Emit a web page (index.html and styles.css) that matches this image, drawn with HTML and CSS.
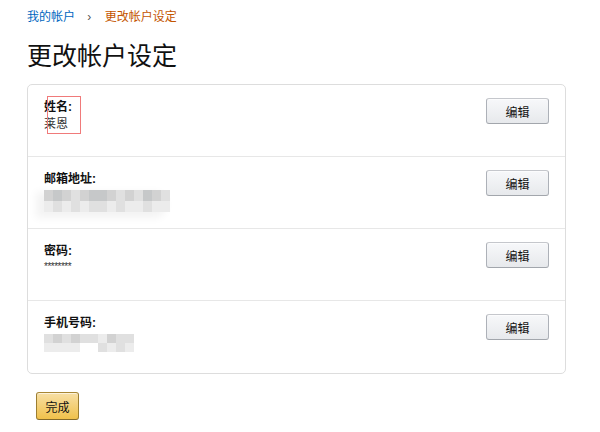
FILE: index.html
```html
<!DOCTYPE html>
<html lang="zh-CN">
<head>
    <meta charset="UTF-8">
    <title>更改帐户设定</title>
    <link rel="stylesheet" href="styles.css">
</head>
<body>
    <div class="page">
        <div class="breadcrumb">
            <a href="#" class="crumb-link">我的帐户</a>
            <span class="crumb-sep">›</span>
            <span class="crumb-current">更改帐户设定</span>
        </div>

        <h1>更改帐户设定</h1>

        <div class="card">
            <div class="row">
                <div class="info">
                    <div class="label">姓名:</div>
                    <div class="value">莱恩</div>
                </div>
                <button class="btn">编辑</button>
                <div class="mark"></div>
            </div>
            <div class="row">
                <div class="info">
                    <div class="label">邮箱地址:</div>
                    <div class="mosaic mosaic-email">
                        <div class="tiles">
                            <span class="t2"></span><span class="t3"></span><span class="t2"></span><span class="t1"></span><span class="t2"></span><span class="t3"></span><span class="t3"></span><span class="t2"></span><span class="t1"></span><span class="t2"></span><span class="t1"></span><span class="t3"></span><span class="t2"></span><span class="t1"></span>
                        </div>
                        <div class="tiles">
                            <span class="t0"></span><span class="t1"></span><span class="t0"></span><span class="t1"></span><span class="t0"></span><span class="t1"></span><span class="t1"></span><span class="t0"></span><span class="t1"></span><span class="t0"></span><span class="t0"></span><span class="t1"></span><span class="t0"></span><span class="t0"></span>
                        </div>
                    </div>
                </div>
                <button class="btn">编辑</button>
            </div>
            <div class="row">
                <div class="info">
                    <div class="label">密码:</div>
                    <div class="value stars">********</div>
                </div>
                <button class="btn">编辑</button>
            </div>
            <div class="row">
                <div class="info">
                    <div class="label">手机号码:</div>
                    <div class="mosaic mosaic-phone">
                        <div class="tiles">
                            <span class="t1"></span><span class="t2"></span><span class="t1"></span><span class="t2"></span><span class="t1"></span><span class="t1"></span><span class="t0"></span><span class="t2"></span><span class="t1"></span><span class="t1"></span>
                        </div>
                        <div class="tiles">
                            <span class="t0"></span><span class="t0"></span><span class="t0"></span><span class="t0"></span><span class="tw"></span><span class="tw"></span><span class="t1"></span><span class="t0"></span><span class="t1"></span><span class="t0"></span>
                        </div>
                    </div>
                </div>
                <button class="btn">编辑</button>
            </div>
        </div>

        <button class="btn btn-done">完成</button>
    </div>
</body>
</html>
```

FILE: styles.css
```css
body {
    margin: 0;
    font-family: "Liberation Sans", "Noto Sans CJK SC", sans-serif;
    color: #111;
    background: #fff;
}
.page {
    padding: 9px 34px 0 27px;
}
.breadcrumb {
    font-size: 12px;
    line-height: 17px;
}
.crumb-link {
    color: #0066c0;
    text-decoration: none;
}
.crumb-sep {
    color: #555;
    margin: 0 10px 0 9px;
}
.crumb-current {
    color: #c45500;
}
h1 {
    font-size: 25px;
    font-weight: normal;
    line-height: 32px;
    margin: 14px 0 12px;
}
.card {
    border: 1px solid #ddd;
    border-radius: 5px;
}
.row {
    position: relative;
    display: flex;
    justify-content: space-between;
    align-items: flex-start;
    height: 72px;
    padding: 13px 16px 0;
    box-sizing: border-box;
    border-bottom: 1px solid #e7e7e7;
}
.row:last-child {
    border-bottom: none;
}
.label {
    font-size: 12px;
    font-weight: bold;
    line-height: 17px;
    padding-top: 1px;
}
.value {
    font-size: 12px;
    line-height: 17px;
    color: #333;
}
.stars {
    font-size: 10px;
    line-height: 14px;
    letter-spacing: -0.5px;
}
.mark {
    position: absolute;
    left: 19px;
    top: 11px;
    width: 34px;
    height: 38px;
    border: 1px solid #f07a7a;
    box-sizing: border-box;
}
.btn {
    width: 63px;
    height: 26px;
    font-family: inherit;
    font-size: 12px;
    color: #111;
    border: 1px solid #adb1b8;
    border-color: #c5c7cc #adb1b8 #a2a6ac;
    border-radius: 3px;
    background: linear-gradient(#f7f8fa, #e7e9ec);
    box-shadow: 0 1px 0 rgba(255,255,255,.6) inset;
    padding: 0;
    cursor: pointer;
}
.btn-done {
    width: 43px;
    height: 28px;
    margin: 18px 0 0 9px;
    border-color: #a88734 #9c7e31 #846a29;
    background: linear-gradient(#f7dfa5, #f0c14b);
}
.mosaic {
    margin-top: 2px;
    filter: blur(0.6px);
}
.tiles {
    display: flex;
}
.tiles span {
    width: 9px;
    height: 11px;
}
.mosaic-email {
    box-shadow: -6px 4px 8px 2px #f3f3f3;
    border-radius: 0 10px 10px 0;
}
.mosaic-phone .tiles span {
    height: 9px;
}
.t0 { background: #ececec; }
.t1 { background: #e0e0e0; }
.t2 { background: #d2d2d2; }
.t3 { background: #c6c8c9; }
.tw { background: #fff; }
```
